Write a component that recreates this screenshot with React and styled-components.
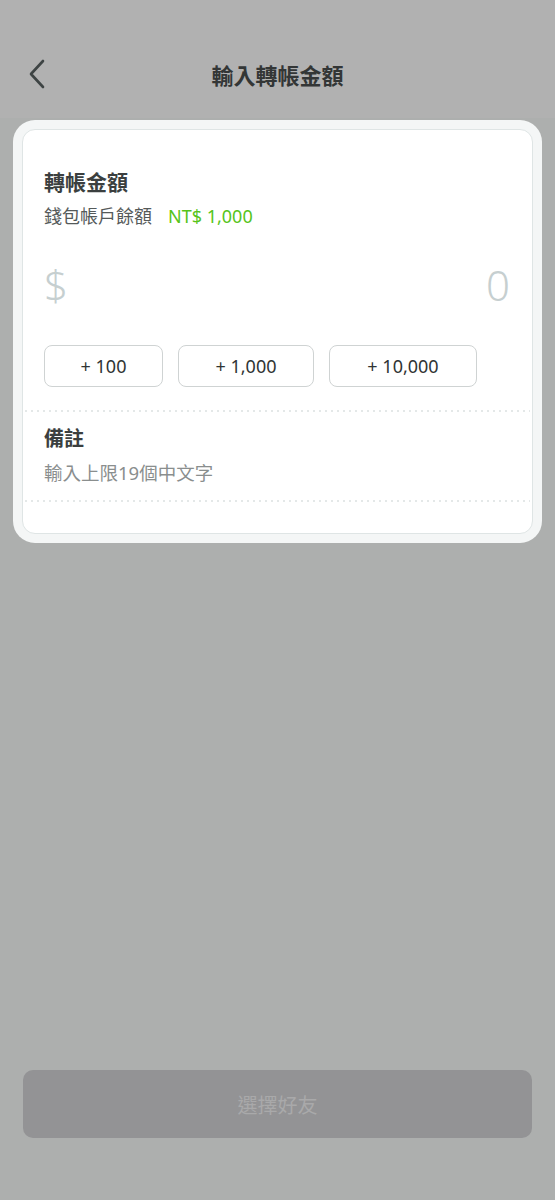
import React from "react";
import styled, { createGlobalStyle } from "styled-components";

const GlobalStyle = createGlobalStyle`
	html, body {
		margin: 0;
		padding: 0;
		background: #adafae;
	}
	body {
		font-family: "Noto Sans", "Noto Sans CJK TC", sans-serif;
	}
`;

const quickAmounts = [
	{ label: "+ 100", width: 119 },
	{ label: "+ 1,000", width: 136 },
	{ label: "+ 10,000", width: 148 },
];

const App = () => {
	return (
		<Page>
			<GlobalStyle />
			<Header>
				<Back aria-label="back">
					<svg width="18" height="30" viewBox="0 0 18 30">
						<path d="M15 2 L3 15 L15 28" fill="none" stroke="#3e4444" strokeWidth="2.6" strokeLinecap="round" strokeLinejoin="round" />
					</svg>
				</Back>
				<Title>輸入轉帳金額</Title>
			</Header>

			<Body>
				<Outer>
					<Card>
						<Section>
							<Label>轉帳金額</Label>
							<Balance>
								錢包帳戶餘額<Green>NT$ 1,000</Green>
							</Balance>
							<AmountRow>
								<Amount>$</Amount>
								<Amount>0</Amount>
							</AmountRow>
							<Buttons>
								{quickAmounts.map((a) => (
									<Quick key={a.label} $width={a.width}>
										{a.label}
									</Quick>
								))}
							</Buttons>
						</Section>
						<Dots />
						<NoteSection>
							<NoteLabel>備註</NoteLabel>
							<NoteHint>輸入上限19個中文字</NoteHint>
						</NoteSection>
						<Dots />
					</Card>
				</Outer>
				<Spacer />
				<Submit>選擇好友</Submit>
			</Body>
		</Page>
	);
};

export default App;

const Page = styled.div`
	width: 555px;
	height: 1200px;
	display: flex;
	flex-direction: column;
	background: #adafae;
`;

const Header = styled.div`
	height: 118px;
	box-sizing: border-box;
	padding-top: 32px;
	background: #b1b1b1;
	display: flex;
	align-items: center;
	justify-content: center;
	position: relative;
`;

const Back = styled.div`
	position: absolute;
	left: 28px;
	top: 59px;
	line-height: 0;
`;

const Title = styled.div`
	font-size: 22px;
	font-weight: 700;
	color: #333636;
	line-height: 30px;
`;

const Body = styled.div`
	flex: 1;
	display: flex;
	flex-direction: column;
	padding: 2px 13px 62px;
`;

const Outer = styled.div`
	background: #f4f6f6;
	border-radius: 22px;
	padding: 9px;
`;

const Card = styled.div`
	background: #ffffff;
	border: 1px solid #dfe5e5;
	border-radius: 13px;
	padding-bottom: 31px;
`;

const Section = styled.div`
	padding: 38px 21px 23px;
`;

const Label = styled.div`
	font-size: 21px;
	font-weight: 700;
	color: #3b3f3f;
	line-height: 28px;
`;

const Balance = styled.div`
	margin-top: 8px;
	font-size: 18px;
	color: #555a5a;
	line-height: 24px;
`;

const Green = styled.span`
	color: #56c41a;
	margin-left: 16px;
`;

const AmountRow = styled.div`
	margin-top: 28px;
	display: flex;
	justify-content: space-between;
	align-items: center;
	padding-right: 1px;
`;

const Amount = styled.div`
	font-size: 42px;
	font-weight: 300;
	color: #c6cfd0;
	line-height: 58px;
`;

const Buttons = styled.div`
	margin-top: 31px;
	display: flex;
	gap: 15px;
`;

const Quick = styled.div`
	width: ${(p) => p.$width}px;
	height: 42px;
	box-sizing: border-box;
	border: 1px solid #cfd3d3;
	border-radius: 8px;
	display: flex;
	align-items: center;
	justify-content: center;
	font-size: 18px;
	color: #303434;
`;

const Dots = styled.div`
	margin: 0 2px;
	height: 2px;
	background-image: repeating-linear-gradient(
		to right,
		#e4e8e8 0 2px,
		transparent 2px 6px
	);
`;

const NoteSection = styled.div`
	padding: 13px 21px 14px;
`;

const NoteLabel = styled.div`
	font-size: 20px;
	font-weight: 700;
	color: #3b3f3f;
	line-height: 28px;
`;

const NoteHint = styled.div`
	margin-top: 7px;
	font-size: 18.5px;
	color: #8a8e8e;
	line-height: 26px;
`;

const Spacer = styled.div`
	flex: 1;
`;

const Submit = styled.div`
	margin: 0 10px;
	height: 68px;
	border-radius: 10px;
	background: #939395;
	color: #a9a9aa;
	font-size: 20px;
	display: flex;
	align-items: center;
	justify-content: center;
`;
